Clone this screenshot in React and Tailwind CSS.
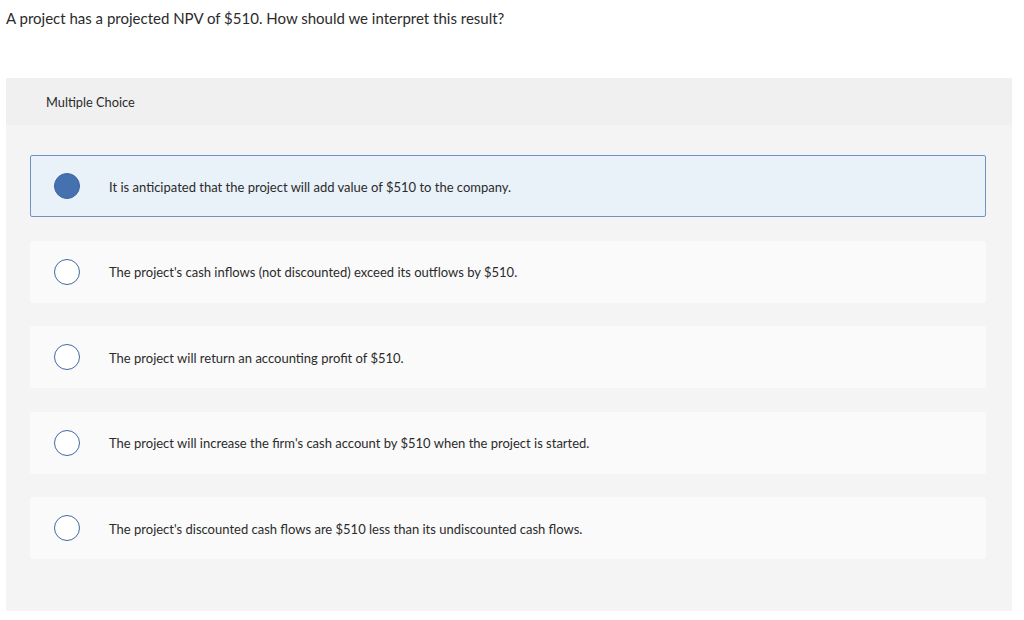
const options = [
  'It is anticipated that the project will add value of $510 to the company.',
  "The project's cash inflows (not discounted) exceed its outflows by $510.",
  'The project will return an accounting profit of $510.',
  "The project will increase the firm's cash account by $510 when the project is started.",
  "The project's discounted cash flows are $510 less than its undiscounted cash flows.",
]

function Option({ text, selected }) {
  return (
    <div
      className={
        selected
          ? 'h-[62px] flex items-center pl-[23px] border border-[#6f92c6] rounded-[2px] bg-[#e9f1f9]'
          : 'h-[62px] flex items-center pl-[24px] rounded-[2px] bg-[#fafafa]'
      }
    >
      {selected ? (
        <span className="w-[26px] h-[26px] rounded-full bg-[#4571b0] border border-[#3c65a0] shrink-0" />
      ) : (
        <span className="w-[26px] h-[26px] rounded-full bg-white border-[1.5px] border-[#3f6aa5] shrink-0" />
      )}
      <span className="ml-[29px] pt-[3px] text-[13px] text-[#2b2b2b]">{text}</span>
    </div>
  )
}

export default function App() {
  return (
    <div className="min-h-[620px] bg-white pl-[6px] pt-[9px] pr-[12px] font-['Lato','Open_Sans',sans-serif]">
      <p className="text-[15px] leading-[18px] text-[#2b2b2b]">
        A project has a projected NPV of $510. How should we interpret this result?
      </p>
      <div className="mt-[51px] rounded-[2px] bg-[#f4f4f4] overflow-hidden">
        <div className="h-[47px] bg-[#f0f0f0] pl-[40px] pt-[3px] flex items-center text-[12.8px] text-[#2b2b2b]">
          Multiple Choice
        </div>
        <div className="pt-[30px] pl-[24px] pr-[26px] pb-[52px] flex flex-col gap-[23.5px]">
          {options.map((o, i) => (
            <Option key={i} text={o} selected={i === 0} />
          ))}
        </div>
      </div>
    </div>
  )
}
